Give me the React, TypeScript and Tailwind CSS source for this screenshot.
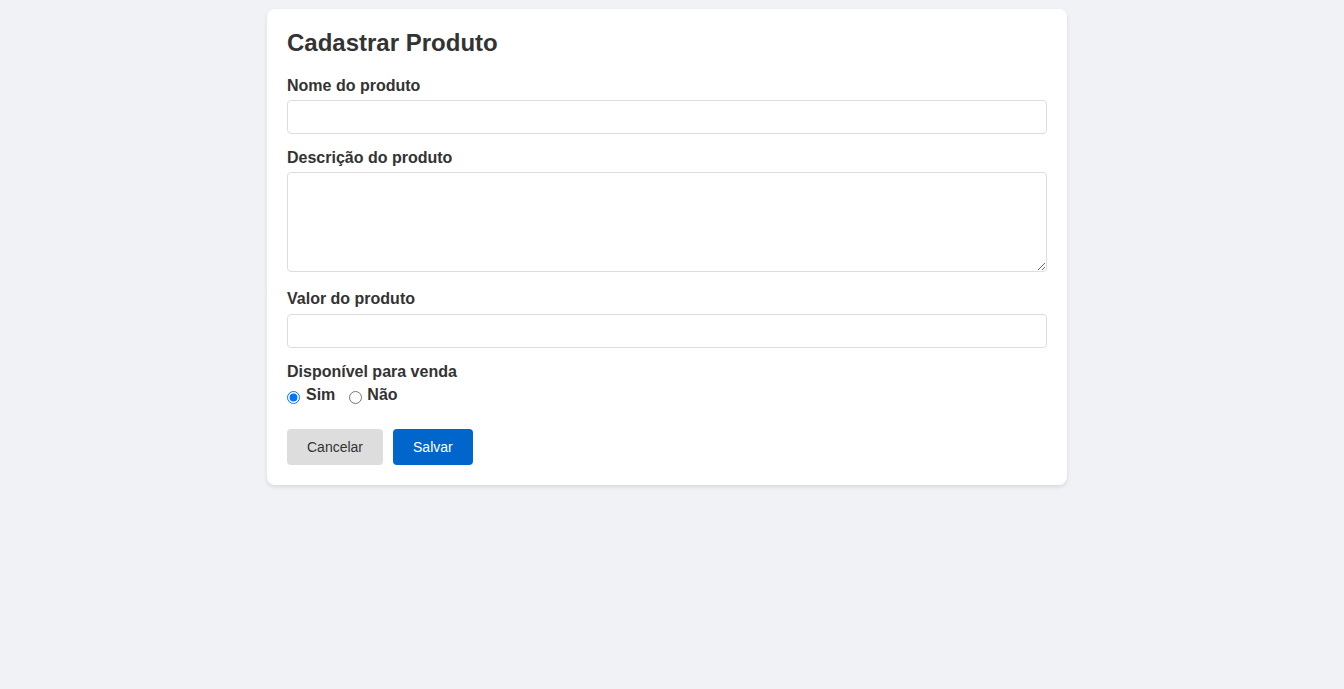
import { useState } from "react";

function Field({ label, extra, children }: { label: string; extra?: string; children: React.ReactNode }) {
  return (
    <div className={extra ? "mb-[15px] pb-[3px]" : "mb-[15px]"}>
      <label className="mb-[5px] block text-base font-bold leading-[18.4px] text-[#333]">{label}</label>
      {children}
    </div>
  );
}

export default function App() {
  const [available, setAvailable] = useState("sim");

  return (
    <div className="min-h-[689px] bg-[#f0f2f5] pr-[10px] pt-[9px] font-['Liberation_Sans',Arial,sans-serif]">
      <div className="mx-auto w-[800px] rounded-lg bg-white p-5 shadow-[0_2px_4px_rgba(0,0,0,0.1)]">
        <h2 className="mb-5 text-2xl font-bold leading-[27.6px] text-[#333]">Cadastrar Produto</h2>

        <Field label="Nome do produto">
          <input
            type="text"
            className="block h-[34px] w-full rounded border border-[#ddd] px-2 text-sm outline-none"
          />
        </Field>

        <Field label="Descrição do produto" extra="textarea">
          <textarea className="block h-[100px] w-full rounded border border-[#ddd] p-2 text-sm outline-none" />
        </Field>

        <Field label="Valor do produto">
          <input
            type="text"
            className="block h-[34px] w-full rounded border border-[#ddd] px-2 text-sm outline-none"
          />
        </Field>

        <div>
          <label className="mb-[5px] block text-base font-bold leading-[18.4px] text-[#333]">
            Disponível para venda
          </label>
          <div className="flex items-center text-base font-bold leading-[18.4px] text-[#333]">
            <label className="mr-[14px] flex items-center">
              <input
                type="radio"
                name="disp"
                checked={available === "sim"}
                onChange={() => setAvailable("sim")}
                className="m-0 mr-[6px] mt-[5px] h-[13px] w-[13px]"
              />
              Sim
            </label>
            <label className="flex items-center">
              <input
                type="radio"
                name="disp"
                checked={available === "nao"}
                onChange={() => setAvailable("nao")}
                className="m-0 mr-[5px] mt-[5px] h-[13px] w-[13px]"
              />
              Não
            </label>
          </div>
        </div>

        <div className="mt-6 flex gap-[10px]">
          <button className="h-9 rounded bg-[#ddd] px-5 text-sm text-[#333]">Cancelar</button>
          <button className="h-9 rounded bg-[#0066cc] px-5 text-sm text-white">Salvar</button>
        </div>
      </div>
    </div>
  );
}
